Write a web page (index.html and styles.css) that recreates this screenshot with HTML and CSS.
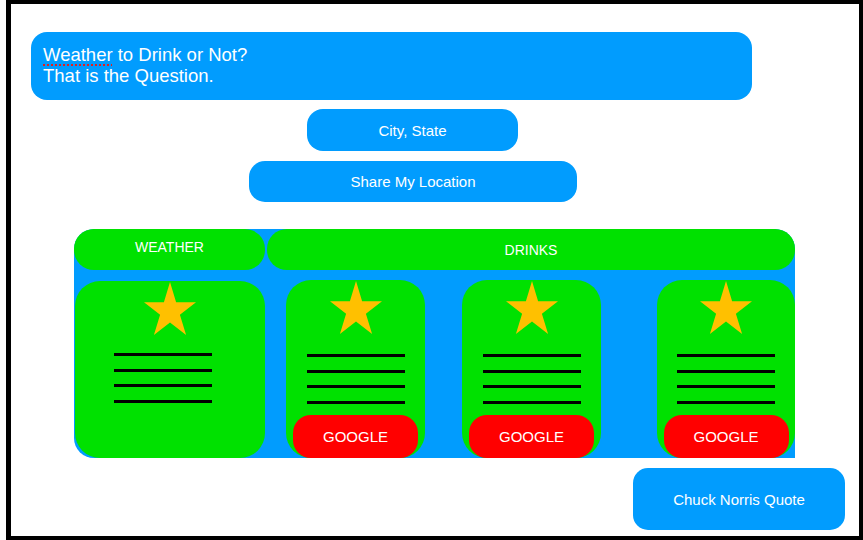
FILE: index.html
```html
<!DOCTYPE html>
<html lang="en">
  <head>
    <meta charset="UTF-8" />
    <meta name="viewport" content="width=device-width, initial-scale=1.0" />
    <title>Weather to Drink or Not?</title>
    <link rel="stylesheet" href="styles.css">
  </head>
  <body>
    <div class="frame">
      <div class="title-box">
        <span class="misspelled">Weather</span> to Drink or Not?<br />
        That is the Question.
      </div>

      <button class="pill city-btn" type="button">City, State</button>
      <button class="pill share-btn" type="button">Share My Location</button>

      <div class="results">
        <!-- weather column -->
        <div class="weather-col">
          <div class="col-header">WEATHER</div>
          <div class="card weather-card">
            <svg class="star" viewBox="0 0 52 53"><polygon points="26,0 32.1,20.2 52,20.2 35.9,32.8 42.1,53 26,40.5 9.9,53 16.1,32.8 0,20.2 19.9,20.2" /></svg>
            <div class="lines">
              <span></span><span></span><span></span><span></span>
            </div>
          </div>
        </div>

        <!-- drinks column -->
        <div class="drinks-col">
          <div class="col-header drinks-header">DRINKS</div>
          <div class="drink-row">
            <div class="card drink-card">
              <svg class="star" viewBox="0 0 52 53"><polygon points="26,0 32.1,20.2 52,20.2 35.9,32.8 42.1,53 26,40.5 9.9,53 16.1,32.8 0,20.2 19.9,20.2" /></svg>
              <div class="lines">
                <span></span><span></span><span></span><span></span>
              </div>
              <button class="google-btn" type="button">GOOGLE</button>
            </div>
            <div class="card drink-card">
              <svg class="star" viewBox="0 0 52 53"><polygon points="26,0 32.1,20.2 52,20.2 35.9,32.8 42.1,53 26,40.5 9.9,53 16.1,32.8 0,20.2 19.9,20.2" /></svg>
              <div class="lines">
                <span></span><span></span><span></span><span></span>
              </div>
              <button class="google-btn" type="button">GOOGLE</button>
            </div>
            <div class="card drink-card last-card">
              <svg class="star" viewBox="0 0 52 53"><polygon points="26,0 32.1,20.2 52,20.2 35.9,32.8 42.1,53 26,40.5 9.9,53 16.1,32.8 0,20.2 19.9,20.2" /></svg>
              <div class="lines">
                <span></span><span></span><span></span><span></span>
              </div>
              <button class="google-btn" type="button">GOOGLE</button>
            </div>
          </div>
        </div>
      </div>

      <button class="pill quote-btn" type="button">Chuck Norris Quote</button>
    </div>
  </body>
</html>
```

FILE: styles.css
```css
body {
  margin: 0;
  font-family: "Liberation Sans", Arial, sans-serif;
  background: #fff;
}
.frame {
  box-sizing: border-box;
  margin-left: 6px;
  width: 857px;
  height: 540px;
  border: 4px solid #000;
  border-left-width: 5px;
  display: flex;
  flex-direction: column;
  align-items: flex-start;
}
.title-box {
  box-sizing: border-box;
  margin-top: 28px;
  margin-left: 20px;
  width: 721px;
  height: 68px;
  padding: 12px 12px;
  background-color: #019cfe;
  border-radius: 16px;
  color: #fff;
  font-size: 18.5px;
  line-height: 21px;
}
.misspelled {
  text-decoration: underline dotted #e02020;
  text-decoration-thickness: 2px;
  text-underline-offset: 3px;
}
.pill {
  border: none;
  background-color: #019cfe;
  color: #fff;
  font-family: "Liberation Sans", Arial, sans-serif;
  font-size: 15px;
  border-radius: 16px;
  padding: 0;
  cursor: pointer;
}
.city-btn {
  margin-top: 9px;
  margin-left: 296px;
  width: 211px;
  height: 42px;
}
.share-btn {
  margin-top: 10px;
  margin-left: 238px;
  width: 328px;
  height: 41px;
}
.quote-btn {
  margin-top: 10px;
  margin-left: 622px;
  width: 212px;
  height: 62px;
  border-radius: 15px;
}
.results {
  margin-top: 27px;
  margin-left: 63px;
  width: 721px;
  height: 229px;
  background-color: #019cfe;
  border-radius: 20px 20px 0 20px;
  display: flex;
  gap: 2px;
}
.weather-col {
  width: 191px;
  display: flex;
  flex-direction: column;
}
.drinks-col {
  width: 528px;
  display: flex;
  flex-direction: column;
}
.col-header {
  height: 41px;
  background-color: #00e100;
  border-radius: 20px;
  color: #fff;
  font-size: 14px;
  display: flex;
  align-items: center;
  justify-content: center;
  padding-bottom: 6px;
  box-sizing: border-box;
}
.drinks-header {
  padding-bottom: 0;
}
.card {
  background-color: #00e100;
  border-radius: 25px;
  display: flex;
  flex-direction: column;
  align-items: center;
}
.weather-card {
  margin-top: 11px;
  margin-left: 1px;
  height: 177px;
}
.weather-card .lines {
  margin-right: 14px;
}
.drink-row {
  margin-top: 10px;
  padding-left: 19px;
  display: flex;
  gap: 37px;
}
.drink-card {
  width: 139px;
  height: 178px;
}
.last-card {
  margin-left: auto;
  width: 138px;
}
.star {
  width: 52px;
  height: 53px;
  margin-top: 1px;
  fill: #ffc000;
}
.lines {
  margin-top: 18px;
  width: 98px;
  display: flex;
  flex-direction: column;
  gap: 12.5px;
}
.drink-card .lines {
  margin-top: 20px;
}
.lines span {
  display: block;
  height: 3px;
  background-color: #000;
}
.google-btn {
  margin-top: auto;
  width: 125px;
  height: 43px;
  border: none;
  border-radius: 18px;
  background-color: #ff0000;
  color: #fff;
  font-family: "Liberation Sans", Arial, sans-serif;
  font-size: 15px;
  padding: 0;
  cursor: pointer;
}
```
